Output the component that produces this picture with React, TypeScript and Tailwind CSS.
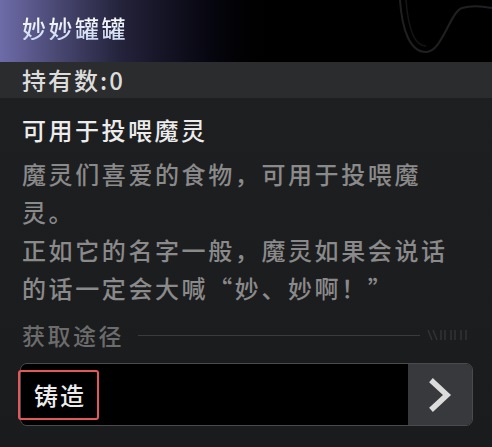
import React from "react";

const cjk = { fontFamily: '"Noto Sans CJK SC", "Noto Sans", sans-serif' };

export default function App() {
  return (
    <div className="w-[492px] h-[447px] overflow-hidden bg-[#1b1c1e] flex flex-col" style={cjk}>
      {/* header */}
      <div className="relative h-[62px] shrink-0 bg-gradient-to-r from-[#6e6ca8] via-[#23223a] via-25% to-black to-60% flex items-center pl-[22px]">
        <svg className="absolute right-0 top-0" width="100" height="62" viewBox="0 0 100 62" fill="none">
          <path d="M8 0 C10 30 18 52 34 52 C50 52 58 12 70 8 C80 5 90 6 100 8" stroke="#202022" strokeWidth="2" />
          <path d="M14 0 C16 26 22 46 34 46" stroke="#161618" strokeWidth="1.5" />
        </svg>
        <span className="relative text-[24px] leading-none tracking-[2.5px] font-medium bg-gradient-to-b from-white to-[#c9d6f0] bg-clip-text text-transparent mb-[6px]">
          妙妙罐罐
        </span>
      </div>

      {/* count */}
      <div className="h-[36px] shrink-0 bg-[#2b2c2e] flex items-center pl-[22px] text-[24px] font-medium tracking-[2px] text-[#dcdcdc] leading-none">
        持有数:0
      </div>

      {/* body */}
      <div className="flex-1 bg-gradient-to-b from-[#1e1f21] to-[#1a1b1d] px-[22px] pt-[13px]">
        <div className="text-[24px] font-medium leading-[38px] tracking-[2.5px] text-[#ececec]">可用于投喂魔灵</div>
        <div className="mt-[6px] text-[24px] font-medium leading-[38px] tracking-[2.6px] text-[#8a8a8a]">
          魔灵们喜爱的食物，可用于投喂魔
          <br />
          灵。
          <br />
          正如它的名字一般，魔灵如果会说话
          <br />
          的话一定会大喊“妙、妙啊！”
        </div>

        <div className="mt-[13px] h-[30px] flex items-center">
          <span className="text-[23px] font-medium leading-none tracking-[2.5px] text-[#6c6c6c]">获取途径</span>
          <div className="ml-[14px] flex-1 h-px bg-[#3a3b3d]" />
          <svg className="ml-[6px]" width="44" height="12" viewBox="0 0 44 12">
            <g stroke="#323337" strokeWidth="1.5">
              <line x1="2" y1="1" x2="6" y2="11" />
              <line x1="7" y1="1" x2="11" y2="11" />
              <line x1="15" y1="1" x2="15" y2="11" />
              <line x1="19" y1="1" x2="19" y2="11" />
              <line x1="25" y1="1" x2="25" y2="11" />
              <line x1="29" y1="1" x2="29" y2="11" />
              <line x1="35" y1="1" x2="35" y2="11" />
              <line x1="40" y1="1" x2="40" y2="11" />
            </g>
          </svg>
        </div>

        {/* source button */}
        <div className="relative mt-[13px] -ml-[2px] w-[453px] h-[63px] rounded-[7px] border-[1.5px] border-[#4a4b4e] flex">
          <div className="flex-1 bg-black rounded-l-[6px]" />
          <div className="w-[64px] bg-[#38393c] rounded-r-[6px] flex items-center justify-center">
            <svg width="30" height="34" viewBox="0 0 30 34" fill="none">
              <polyline points="8,4 22,17 8,30" stroke="#dcdcdc" strokeWidth="5.5" strokeLinecap="square" />
            </svg>
          </div>
          <div className="absolute -left-[3px] top-[6px] w-[81px] h-[50px] border-[2.5px] border-[#e4585a] rounded-[3px] flex items-center pl-[14px]">
            <span className="text-[24px] font-medium leading-none tracking-[2px] text-[#ececec]">铸造</span>
          </div>
        </div>
      </div>
    </div>
  );
}
